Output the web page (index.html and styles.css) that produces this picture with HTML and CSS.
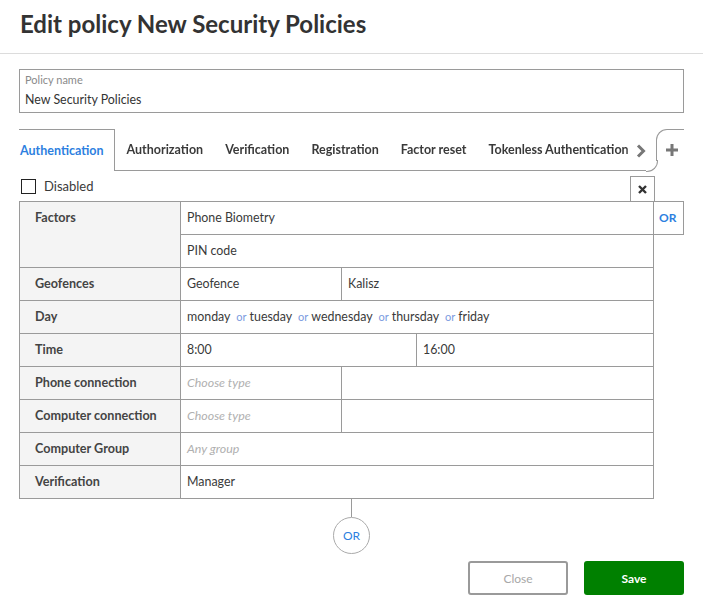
FILE: index.html
```html
<!DOCTYPE html>
<html>
<head>
<meta charset="utf-8">
<link rel="stylesheet" href="styles.css">
</head>
<body>
<div class="dialog">
  <header class="head"><h1 class="title">Edit policy New Security Policies</h1></header>
  <div class="content">
    <div class="field">
      <div class="field-label">Policy name</div>
      <div class="field-value">New Security Policies</div>
    </div>

    <div class="tabs">
      <div class="tab active">Authentication</div>
      <div class="strip">
        <div class="strip-items">
          <span class="tab">Authorization</span>
          <span class="tab">Verification</span>
          <span class="tab">Registration</span>
          <span class="tab">Factor reset</span>
          <span class="tab">Tokenless Authentication</span>
        </div>
        <span class="chev"><svg width="10" height="14" viewBox="0 0 10 14"><path d="M2 1.5 L7.5 7 L2 12.5" fill="none" stroke="#777" stroke-width="3"/></svg></span>
      </div>
      <div class="plus"><svg width="12" height="12" viewBox="0 0 12 12"><path d="M6 0 V12 M0 6 H12" stroke="#777" stroke-width="3"/></svg></div>
    </div>

    <div class="toolbar">
      <label class="check"><span class="box"></span><span>Disabled</span></label>
      <span class="xbtn"><svg width="9" height="9" viewBox="0 0 9 9"><path d="M1 1 L8 8 M8 1 L1 8" stroke="#333" stroke-width="2.4"/></svg></span>
    </div>

    <div class="rule-wrap">
      <div class="rule">
        <div class="row">
          <div class="label tall">Factors</div>
          <div class="values stack">
            <div class="cell">Phone Biometry</div>
            <div class="cell">PIN code</div>
          </div>
        </div>
        <div class="row">
          <div class="label">Geofences</div>
          <div class="values">
            <div class="cell w161">Geofence</div>
            <div class="cell grow">Kalisz</div>
          </div>
        </div>
        <div class="row">
          <div class="label">Day</div>
          <div class="values">
            <div class="cell grow">monday <span class="or">or</span>tuesday <span class="or">or</span>wednesday <span class="or">or</span>thursday <span class="or">or</span>friday</div>
          </div>
        </div>
        <div class="row">
          <div class="label">Time</div>
          <div class="values">
            <div class="cell w236">8:00</div>
            <div class="cell grow">16:00</div>
          </div>
        </div>
        <div class="row">
          <div class="label">Phone connection</div>
          <div class="values">
            <div class="cell w161 ph">Choose type</div>
            <div class="cell grow"></div>
          </div>
        </div>
        <div class="row">
          <div class="label">Computer connection</div>
          <div class="values">
            <div class="cell w161 ph">Choose type</div>
            <div class="cell grow"></div>
          </div>
        </div>
        <div class="row">
          <div class="label">Computer Group</div>
          <div class="values">
            <div class="cell grow ph">Any group</div>
          </div>
        </div>
        <div class="row">
          <div class="label">Verification</div>
          <div class="values">
            <div class="cell grow">Manager</div>
          </div>
        </div>
      </div>
      <div class="side"><div class="or-box">OR</div></div>
    </div>

    <div class="connector">
      <div class="vline"></div>
      <div class="or-circle">OR</div>
    </div>

    <div class="actions">
      <button class="btn close">Close</button>
      <button class="btn save">Save</button>
    </div>
  </div>
</div>
</body>
</html>
```

FILE: styles.css
```css
* { box-sizing: border-box; }
html, body { margin: 0; padding: 0; background: #fff; }
body {
  font-family: "Lato", "Open Sans", sans-serif;
  color: #3a3a3a;
  width: 703px;
  height: 613px;
  overflow: hidden;
}
.head {
  height: 54px;
  border-bottom: 1px solid #dcdcdc;
  padding: 10px 20px 0;
}
.title {
  margin: 0;
  font-size: 24px;
  font-weight: 700;
  color: #333;
  line-height: 28px;
}
.content {
  padding: 15px 19px 0;
}
.field {
  height: 44px;
  border: 1px solid #9a9a9a;
  padding: 3px 5px 0;
}
.field-label {
  font-size: 11px;
  color: #8a8a8a;
  line-height: 14px;
}
.field-value {
  font-size: 12.4px;
  color: #333;
  line-height: 18px;
  margin-top: 4px;
}

/* tabs */
.tabs {
  margin-top: 16px;
  height: 42px;
  display: flex;
  align-items: flex-start;
}
.tab {
  font-size: 12.5px;
  font-weight: 700;
  color: #3a3a3a;
  white-space: nowrap;
  line-height: 16px;
}
.tab.active {
  height: 42px;
  border-top: 1px solid #9a9a9a;
  border-right: 1px solid #9a9a9a;
  color: #2d7fe0;
  padding: 13px 10px 0 1px;
}
.strip {
  flex: 1;
  height: 42px;
  border-bottom: 1px solid #9a9a9a;
  display: flex;
  align-items: flex-start;
  padding-top: 13px;
  margin-right: 10px;
  min-width: 0;
}
.strip-items {
  flex: 1;
  min-width: 0;
  display: flex;
  gap: 22px;
  padding-left: 12px;
  overflow: hidden;
  -webkit-mask-image: linear-gradient(to right, #000 calc(100% - 8px), rgba(0,0,0,0.25));
  mask-image: linear-gradient(to right, #000 calc(100% - 8px), rgba(0,0,0,0.25));
}
.chev {
  flex: 0 0 auto;
  width: 12px;
  padding-left: 2px;
  padding-top: 2px;
  display: flex;
}
.plus {
  position: relative;
  width: 28px;
  height: 32px;
  border-top: 1px solid #9a9a9a;
  border-left: 1px solid #9a9a9a;
  border-top-left-radius: 11px;
  display: flex;
  justify-content: center;
  padding-top: 14px;
  padding-left: 2px;
}
.plus::before {
  content: "";
  position: absolute;
  left: -11px;
  top: 30px;
  width: 11px;
  height: 11px;
  border-right: 1px solid #9a9a9a;
  border-bottom: 1px solid #9a9a9a;
  border-bottom-right-radius: 11px;
}
.plus svg { display: block; }

/* toolbar */
.toolbar {
  width: 636px;
  height: 30px;
  display: flex;
  justify-content: space-between;
  align-items: center;
}
.check {
  display: flex;
  align-items: center;
  gap: 8px;
  font-size: 13px;
  color: #3a3a3a;
  padding-left: 2px;
}
.box {
  width: 15px;
  height: 15px;
  border: 1px solid #222;
  display: block;
}
.xbtn {
  align-self: flex-end;
  width: 25px;
  height: 25px;
  border: 1px solid #9a9a9a;
  border-bottom: none;
  display: flex;
  align-items: center;
  justify-content: center;
  margin-top: 5px;
}
.xbtn svg { display: block; }

/* rule table */
.rule-wrap {
  display: flex;
  align-items: flex-start;
}
.rule {
  width: 636px;
  border-top: 1px solid #9a9a9a;
  border-left: 1px solid #9a9a9a;
}
.row {
  display: flex;
}
.label {
  width: 161px;
  flex: 0 0 161px;
  background: #f4f4f4;
  border-right: 1px solid #9a9a9a;
  border-bottom: 1px solid #9a9a9a;
  font-size: 12.6px;
  font-weight: 700;
  color: #444;
  padding: 8px 0 0 15px;
  height: 33px;
  line-height: 16px;
}
.label.tall { height: auto; }
.values {
  flex: 1;
  display: flex;
  min-width: 0;
}
.values.stack { flex-direction: column; }
.cell {
  height: 33px;
  border-right: 1px solid #9a9a9a;
  border-bottom: 1px solid #9a9a9a;
  font-size: 12.4px;
  color: #3a3a3a;
  padding: 8px 0 0 6px;
  line-height: 16px;
  white-space: nowrap;
}
.cell.w161 { width: 161px; flex: 0 0 161px; }
.cell.w236 { width: 236px; flex: 0 0 236px; }
.cell.grow { flex: 1; }
.cell.ph { color: #b0b0b0; font-style: italic; }
.or {
  font-size: 11px;
  color: #7b9be0;
  margin: 0 3px 0 3px;
}
.side { width: 30px; }
.or-box {
  height: 34px;
  border-top: 1px solid #9a9a9a;
  border-right: 1px solid #9a9a9a;
  border-bottom: 1px solid #9a9a9a;
  font-size: 12px;
  font-weight: 700;
  color: #2d7fe0;
  padding: 8px 0 0 5px;
  line-height: 16px;
}

/* connector */
.connector {
  display: flex;
  flex-direction: column;
  align-items: center;
}
.vline {
  width: 1px;
  height: 18px;
  background: #9a9a9a;
}
.or-circle {
  width: 37px;
  height: 37px;
  border: 1px solid #aaa;
  border-radius: 50%;
  display: flex;
  align-items: center;
  justify-content: center;
  font-size: 12px;
  color: #2d7fe0;
}

/* actions */
.actions {
  display: flex;
  justify-content: flex-end;
  gap: 16px;
  margin-top: 7px;
}
.btn {
  width: 100px;
  height: 34px;
  border-radius: 3px;
  font-family: inherit;
  font-size: 12px;
  cursor: pointer;
}
.btn.close {
  background: #fff;
  border: 2px solid #9a9a9a;
  color: #a8a8a8;
}
.btn.save {
  background: #008000;
  border: none;
  color: #fff;
  font-weight: 700;
}
```
